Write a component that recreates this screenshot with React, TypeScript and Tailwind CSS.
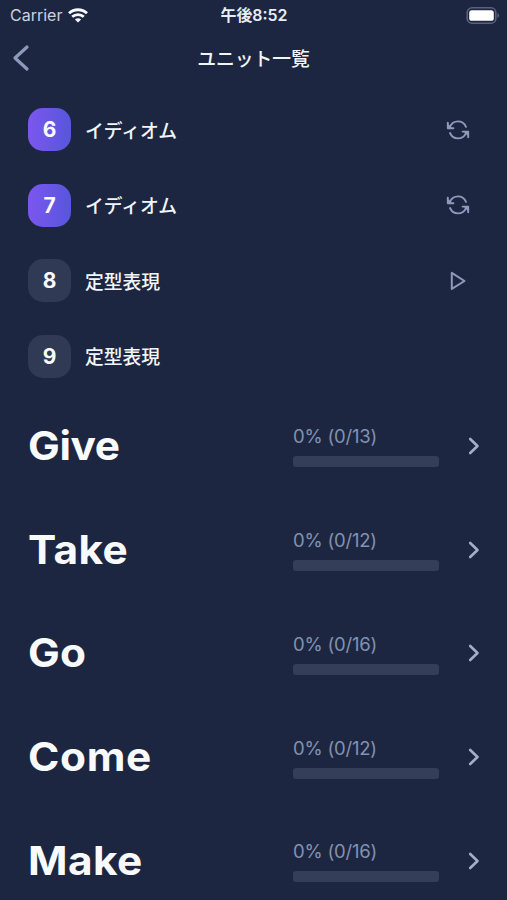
type Unit = {
  number: number;
  title: string;
  active?: boolean;
  action?: "retry" | "play";
};

const units: Unit[] = [
  { number: 6, title: "イディオム", active: true, action: "retry" },
  { number: 7, title: "イディオム", active: true, action: "retry" },
  { number: 8, title: "定型表現", action: "play" },
  { number: 9, title: "定型表現" },
];

const verbs = [
  { name: "Give", total: 13, tracking: "tracking-[-0.4px]" },
  { name: "Take", total: 12, tracking: "tracking-[0.3px]" },
  { name: "Go", total: 16, tracking: "tracking-[0.2px]" },
  { name: "Come", total: 12, tracking: "tracking-[0.6px]" },
  { name: "Make", total: 16, tracking: "tracking-[0.4px]" },
];

function WifiIcon() {
  return (
    <svg width="20" height="15" viewBox="0 0 20 15" fill="none" stroke="#f8fafc" strokeWidth="2.8">
      <path d="M1 5.2C6 .6 14 .6 19 5.2" />
      <path d="M4.2 8.8C7.4 5.8 12.6 5.8 15.8 8.8" />
      <path d="M10 14.6 6.9 11.4C8.6 9.9 11.4 9.9 13.1 11.4Z" fill="#f8fafc" stroke="none" />
    </svg>
  );
}

function BatteryIcon() {
  return (
    <svg width="34" height="17" viewBox="0 0 34 17">
      <rect x="1.2" y=".8" width="28.6" height="15.4" rx="4.8" fill="none" stroke="#5c617b" strokeWidth="1.6" />
      <rect x="3.2" y="3.2" width="24.6" height="10.6" rx="2.6" fill="#fff" />
      <path d="M31.4 6c2.2.8 2.2 4 0 4.8z" fill="#5c617b" />
    </svg>
  );
}

function RetryIcon() {
  return (
    <svg width="24" height="24" viewBox="0 0 24 24" fill="none" stroke="#8d9abb" strokeWidth="1.9" strokeLinecap="round" strokeLinejoin="round">
      <path d="M20 8.8C18.4 5.2 15.5 3.4 12 3.4c-3.6 0-6.6 2-8.3 5.8" />
      <path d="M4 15c1.6 3.6 4.5 5.4 8 5.4 3.6 0 6.6-2 8.3-5.8" />
      <path d="M1.8 4.6v5.6h5.6" />
      <path d="M2.2 7.2v2.6h2.6z" fill="#8d9abb" />
      <path d="M22.2 19.2v-5.6h-5.6" />
      <path d="M21.8 16.6V14h-2.6z" fill="#8d9abb" />
    </svg>
  );
}

function PlayIcon() {
  return (
    <svg width="24" height="24" viewBox="0 0 24 24" fill="none" stroke="#8d9abb" strokeWidth="2" strokeLinejoin="round">
      <path d="M5.8 3.9v16L18.5 12z" />
    </svg>
  );
}

function UnitRow({ unit }: { unit: Unit }) {
  return (
    <li className="flex h-[75.5px] items-center pr-[37px] pl-7">
      <div
        className={`flex size-[43px] shrink-0 items-center justify-center rounded-[15px] text-[21px] font-bold text-slate-50 ${
          unit.active ? "bg-linear-to-r from-[#7c56ee] to-[#5656dc]" : "bg-[#303a54]"
        }`}
      >
        {unit.number}
      </div>
      <span className="ml-3.5 flex-1 font-['Noto_Sans_CJK_JP',sans-serif] text-[18.8px] font-medium text-slate-100">
        {unit.title}
      </span>
      {unit.action === "retry" && <RetryIcon />}
      {unit.action === "play" && <PlayIcon />}
    </li>
  );
}

export default function App() {
  return (
    <div className="flex h-[900px] w-full flex-col overflow-hidden bg-[#1d2640] font-[Inter,'Noto_Sans_CJK_JP',sans-serif] text-slate-50">
      {/* Status bar */}
      <div className="grid h-[30px] shrink-0 grid-cols-3 items-center pr-[7px] pl-2.5">
        <div className="flex items-center gap-1.5 text-base text-[#cbd2df]">
          Carrier
          <WifiIcon />
        </div>
        <div className="pt-0.5 pr-0.5 text-center text-[15.9px] font-semibold whitespace-nowrap text-[#e8edf5]">
          午後8:52
        </div>
        <div className="flex justify-end">
          <BatteryIcon />
        </div>
      </div>

      {/* Header */}
      <header className="grid h-[62px] shrink-0 grid-cols-[40px_1fr_40px] items-center pb-1.5">
        <svg className="ml-3" width="18" height="28" viewBox="0 0 18 28" fill="none" stroke="#8d9abb" strokeWidth="3.2" strokeLinecap="round" strokeLinejoin="round">
          <path d="M15 3 3 14 15 25" />
        </svg>
        <h1 className="text-center font-['Noto_Sans_CJK_JP',sans-serif] text-[18.8px] font-medium text-slate-100">
          ユニット一覧
        </h1>
      </header>

      <ul className="shrink-0">
        {units.map((unit) => (
          <UnitRow key={unit.number} unit={unit} />
        ))}
      </ul>

      <ul className="shrink-0">
        {verbs.map((verb) => (
          <li key={verb.name} className="flex h-[103.75px] items-center pr-[27px] pl-7">
            <span className={`w-[265px] origin-left scale-x-106 text-[40px] leading-none font-bold ${verb.tracking}`}>
              {verb.name}
            </span>
            <div className="flex w-[146px] flex-col gap-[9px] pt-px">
              <span className="text-[18.5px] leading-[22px] tracking-[-0.2px] text-[#8491b1]">0% (0/{verb.total})</span>
              <div className="h-[11px] rounded-[3px] bg-[#343e58]" />
            </div>
            <svg className="ml-auto" width="12" height="18" viewBox="0 0 12 18" fill="none" stroke="#a3aec8" strokeWidth="2.6" strokeLinecap="round" strokeLinejoin="round">
              <path d="M2.2 2 9.5 9 2.2 16" />
            </svg>
          </li>
        ))}
      </ul>
    </div>
  );
}
